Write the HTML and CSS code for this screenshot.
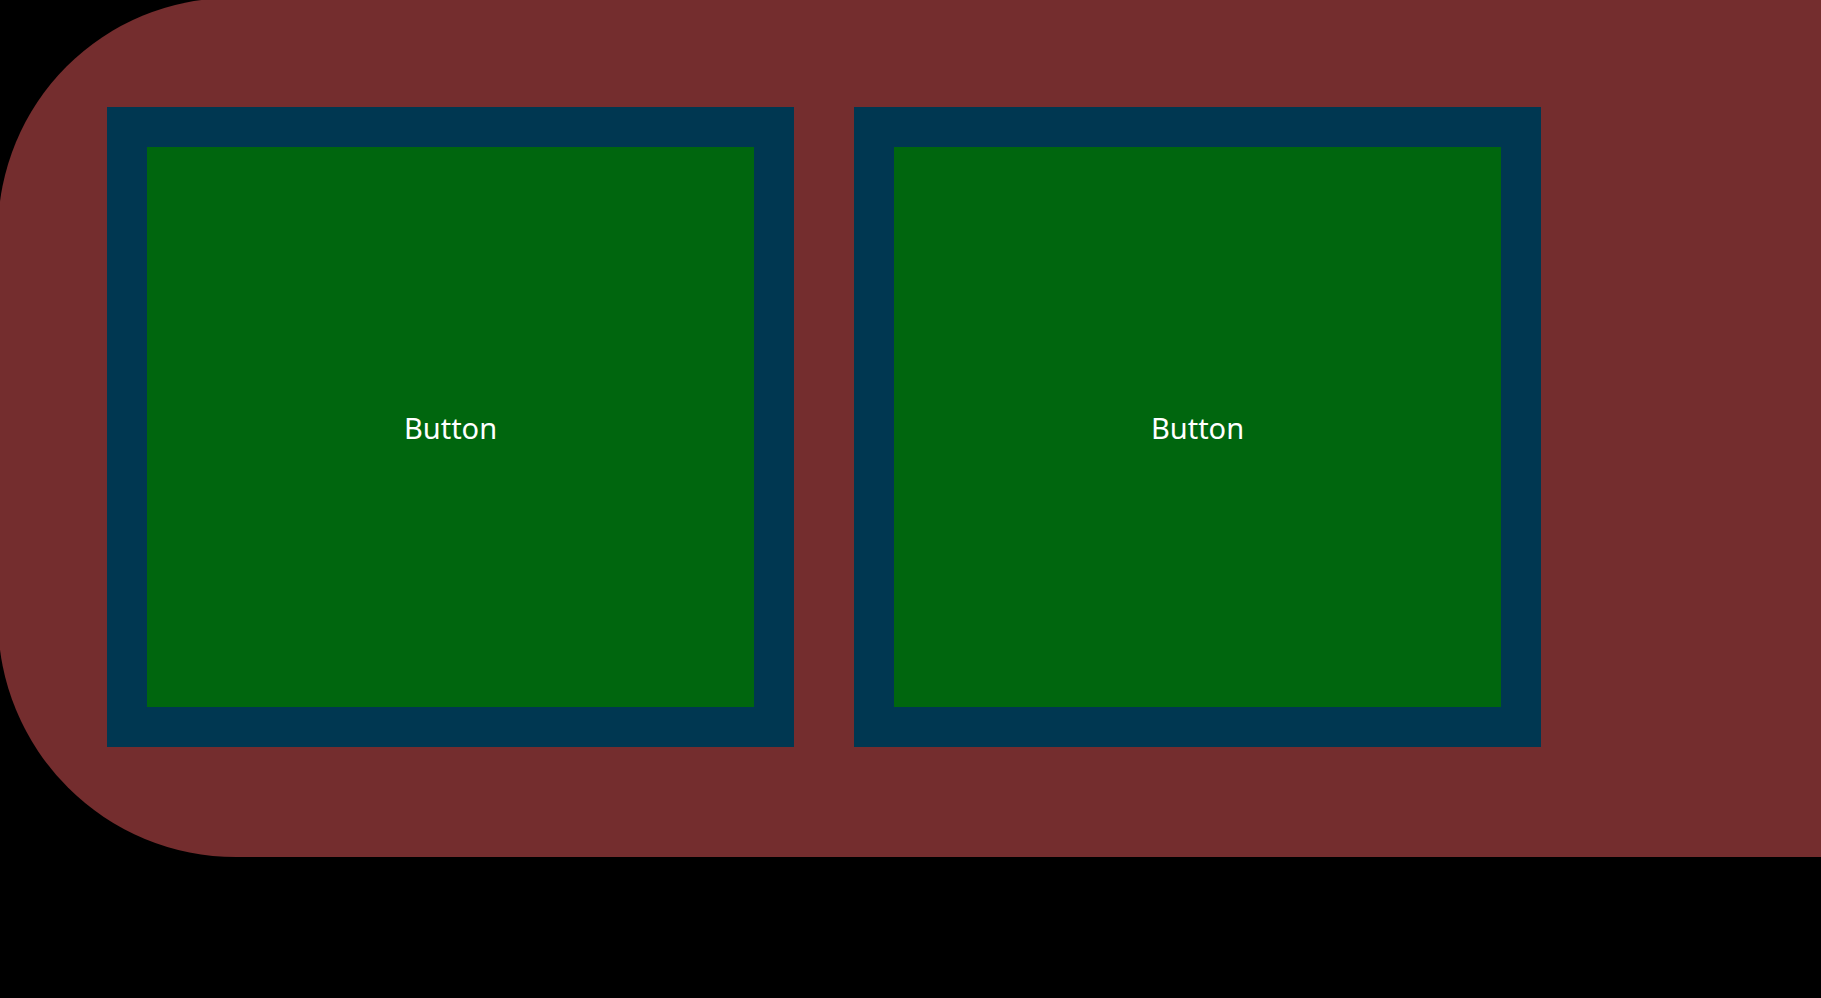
FILE: index.html
```html
<!DOCTYPE html>
<html>
<head>
<meta charset="utf-8">
<link rel="stylesheet" href="styles.css">
</head>
<body>
<div class="panel">
  <button class="btn">Button</button>
  <button class="btn">Button</button>
</div>
</body>
</html>
```
FILE: styles.css
```css
html, body {
  margin: 0;
  padding: 0;
  background: #000000;
  overflow: hidden;
  width: 1821px;
  height: 998px;
}
.panel {
  box-sizing: border-box;
  width: 1823px;
  height: 859px;
  margin: -2px 0 0 -2px;
  background: #742d2e;
  border-radius: 234px 0 0 238px;
  display: flex;
  align-items: flex-start;
  gap: 60px;
  padding: 109px 0 0 109px;
}
.btn {
  box-sizing: border-box;
  width: 687px;
  height: 640px;
  margin: 0;
  padding: 0;
  background: #00660e;
  border: 40px solid #003751;
  color: #ffffff;
  font-family: "Noto Sans", "Open Sans", sans-serif;
  font-size: 29px;
  display: flex;
  align-items: center;
  justify-content: center;
  cursor: default;
}
```
